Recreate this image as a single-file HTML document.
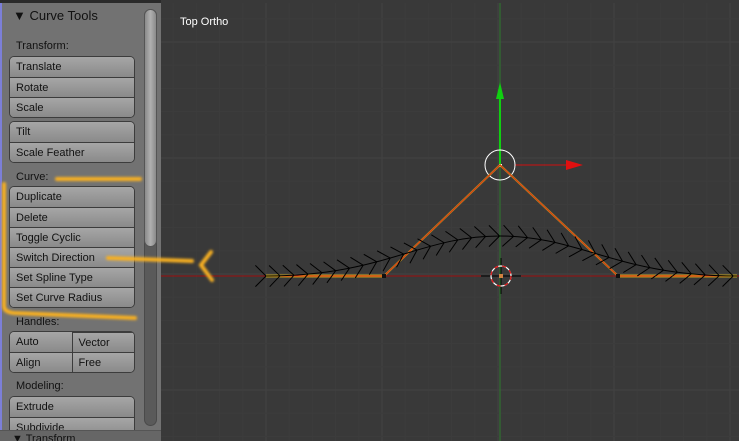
<!DOCTYPE html>
<html><head><meta charset="utf-8"><style>
*{margin:0;padding:0;box-sizing:border-box}
body{width:739px;height:441px;overflow:hidden;background:#393939;position:relative;font-family:"Liberation Sans","DejaVu Sans",sans-serif;font-size:11px}
#panel{position:absolute;left:0;top:0;width:161px;height:441px;background:#727272}
#edge{position:absolute;left:0;top:0;width:2px;height:441px;background:#7c7fd8}
#topb{position:absolute;left:0;top:0;width:161px;height:3px;background:#2a2a2a}
.lbl{position:absolute;left:16px;color:#111;font-size:11px}
.hdr{position:absolute;left:13px;top:8px;color:#111;font-size:13px}
.grp{position:absolute;left:9px;width:126px;border:1px solid #3c3c3c;border-radius:5px;overflow:hidden;background:#8f8f8f}
.btn{height:20px;line-height:21px;padding-left:6px;color:#111;border-top:1px solid #3c3c3c;background:linear-gradient(#a6a6a6,#8a8a8a)}
.btn:first-child{border-top:none}
.row{display:flex}.row .btn{flex:1}.row .btn+.btn{border-left:1px solid #3c3c3c}
#sb{position:absolute;left:144px;top:9px;width:13px;height:417px;border-radius:7px;background:#5a5a5a;border:1px solid #4a4a4a}
#th{position:absolute;left:144px;top:9px;width:13px;height:238px;border-radius:7px;background:linear-gradient(90deg,#8a8a8a,#b0b0b0,#8a8a8a);border:1px solid #555}
#bot{position:absolute;left:0;top:430px;width:161px;height:11px;background:#666;border-top:1px solid #555;overflow:hidden}
</style></head><body>
<div id="panel">
<div id="edge"></div><div id="topb"></div>
<div class="hdr">▼ Curve Tools</div>
<div class="lbl" style="top:40px">Transform:</div>
<div class="grp" style="top:56px"><div class="btn">Translate</div><div class="btn">Rotate</div><div class="btn">Scale</div></div>
<div class="grp" style="top:121px"><div class="btn">Tilt</div><div class="btn">Scale Feather</div></div>
<div class="lbl" style="top:171px">Curve:</div>
<div class="grp" style="top:186px"><div class="btn">Duplicate</div><div class="btn">Delete</div><div class="btn">Toggle Cyclic</div><div class="btn">Switch Direction</div><div class="btn">Set Spline Type</div><div class="btn">Set Curve Radius</div></div>
<div class="lbl" style="top:316px">Handles:</div>
<div class="grp" style="top:331px"><div class="row"><div class="btn">Auto</div><div class="btn">Vector</div></div><div class="row"><div class="btn" style="border-top:1px solid #3c3c3c">Align</div><div class="btn" style="border-top:1px solid #3c3c3c">Free</div></div></div>
<div class="lbl" style="top:380px">Modeling:</div>
<div class="grp" style="top:396px;height:40px"><div class="btn">Extrude</div><div class="btn">Subdivide</div></div>
<div id="sb"></div><div id="th"></div>
<div id="bot"><span style="position:absolute;left:12px;top:2px;font-size:11px;color:#111">▼ Transform</span></div>
</div>
<svg id="vp" width="739" height="441" style="position:absolute;left:0;top:0">
<defs><filter id="bl"><feGaussianBlur stdDeviation="1.2"/></filter><clipPath id="vc"><rect x="161" y="3" width="578" height="438"/></clipPath></defs>
<g clip-path="url(#vc)">
<g id="grid"></g>
<line x1="161" y1="276" x2="739" y2="276" stroke="#a01010" stroke-width="1"/>
<line x1="500" y1="3" x2="500" y2="441" stroke="#2d7a2d" stroke-width="1"/>
<line x1="500" y1="95" x2="500" y2="165" stroke="#10d010" stroke-width="2"/>
<polygon points="500,82 504,99 496,99" fill="#10d010"/>
<line x1="515" y1="165" x2="570" y2="165" stroke="#d01010" stroke-width="1"/>
<polygon points="566,160 583,165 566,170" fill="#e01010"/>
<circle cx="500" cy="165" r="15" fill="none" stroke="#fff" stroke-width="1"/>
<rect x="499" y="164" width="3" height="3" fill="#fff"/>
<polyline points="384,276 500,165 618,276" fill="none" stroke="#b89a20" stroke-width="2"/>
<polyline points="384,276 500,165 618,276" fill="none" stroke="#e02810" stroke-width="0.9"/>
<line x1="266" y1="276" x2="384" y2="276" stroke="#c0a020" stroke-width="3"/>
<line x1="618" y1="276" x2="737" y2="276" stroke="#c0a020" stroke-width="3"/>
<line x1="266" y1="276" x2="384" y2="276" stroke="#e02810" stroke-width="1"/>
<line x1="618" y1="276" x2="737" y2="276" stroke="#e02810" stroke-width="1"/>
<path id="cv" d="M266,276 C384,276 420,236 500,236 C580,236 618,276 737,276" fill="none" stroke="#000" stroke-width="1"/>
<g id="hairs" stroke="#000" stroke-width="1"></g>
<rect x="382" y="274" width="4" height="4" fill="#111"/><rect x="616" y="274" width="4" height="4" fill="#111"/>
<line x1="501" y1="258" x2="501" y2="294" stroke="#000"/><line x1="481" y1="276" x2="521" y2="276" stroke="#000"/>
<circle cx="501" cy="276" r="10" fill="none" stroke="#fff" stroke-width="1.2"/>
<circle cx="501" cy="276" r="10" fill="none" stroke="#e01010" stroke-width="1.2" stroke-dasharray="4 4"/>
<rect x="499" y="274" width="4" height="4" fill="#d08040"/>
<text x="180" y="25" fill="#fff" font-size="11" font-family="Liberation Sans, sans-serif">Top Ortho</text>
</g>
<g stroke="#f8b020" stroke-width="4" fill="none" stroke-linecap="round" filter="url(#bl)">
<line x1="57" y1="179" x2="140" y2="179"/>
<path d="M4,184 L4,306 Q4,312 14,313 L135,318"/>
<line x1="108" y1="258" x2="192" y2="261"/>
<polyline points="211,252 201,265 212,280"/>
</g>
</svg>
<script>
var g=document.getElementById('grid'),s='';
for(var x=498-116*3;x<739;x+=23.2){var m=Math.abs(((x-498)/116)-Math.round((x-498)/116))<0.01;s+='<line x1="'+x+'" y1="3" x2="'+x+'" y2="441" stroke="'+(m?'#424242':'#3c3c3c')+'"/>';}
for(var y=42-116;y<441;y+=23.2){var m=Math.abs(((y-42)/116)-Math.round((y-42)/116))<0.01;s+='<line x1="161" y1="'+y+'" x2="739" y2="'+y+'" stroke="'+(m?'#424242':'#3c3c3c')+'"/>';}
g.innerHTML=s;
var p=document.getElementById('cv'),L=p.getTotalLength(),h='';
for(var d=0;d<L;d+=14){var a=p.getPointAtLength(d),b=p.getPointAtLength(Math.min(L,d+1)),c=p.getPointAtLength(Math.max(0,d-1));
var tx=b.x-c.x,ty=b.y-c.y,n=Math.hypot(tx,ty)||1;tx/=n;ty/=n;var k=15;
var c45=Math.SQRT1_2;
var ax=-tx*c45-ty*c45,ay=-ty*c45+tx*c45,bx=-tx*c45+ty*c45,by=-ty*c45-tx*c45;
h+='<line x1="'+a.x+'" y1="'+a.y+'" x2="'+(a.x+ax*k)+'" y2="'+(a.y+ay*k)+'"/><line x1="'+a.x+'" y1="'+a.y+'" x2="'+(a.x+bx*k)+'" y2="'+(a.y+by*k)+'"/>';}
document.getElementById('hairs').innerHTML=h;
</script>
</body></html>
